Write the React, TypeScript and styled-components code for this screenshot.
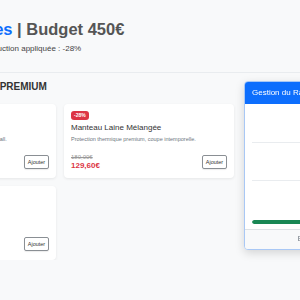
import styled, { createGlobalStyle } from "styled-components";

const GlobalStyle = createGlobalStyle`
  body {
    margin: 0;
    overflow: hidden;
    background-color: #f8f9fa;
    font-family: "Liberation Sans", Arial, sans-serif;
    color: #333333;
  }
`;

const Header = styled.header`
  border-bottom: 1px solid #e9ecef;
  padding: 20px 0 19px;
`;

const HeaderInner = styled.div`
  margin-left: -104px;
  white-space: nowrap;
`;

const Title = styled.h1`
  margin: 0;
  font-size: 16.5px;
  line-height: 1.2;
  font-weight: 700;
  color: #555555;
`;

const Accent = styled.span`
  color: #0d6efd;
`;

const Subtitle = styled.p`
  margin: 4px 0 0 -2px;
  font-size: 8px;
  line-height: 1.2;
  color: #444444;
`;

const Main = styled.main`
  margin-left: -114px;
  padding-top: 8px;
`;

const SectionTitle = styled.h2`
  margin: 0 0 11px;
  padding-left: 2px;
  font-size: 10px;
  line-height: 1.2;
  font-weight: 700;
  color: #333333;
  white-space: nowrap;
`;

const Grid = styled.div`
  display: grid;
  grid-template-columns: 170px 170px;
  gap: 8px;
`;

const Card = styled.article`
  display: flex;
  flex-direction: column;
  background-color: #ffffff;
  border-radius: 4px;
  box-shadow: 0 1px 3px rgba(0, 0, 0, 0.08);
  padding: 7px 7px 8px;
  min-height: 59px;
`;

const Badge = styled.span`
  align-self: flex-start;
  background-color: #dc3545;
  color: #ffffff;
  font-size: 5px;
  font-weight: 700;
  line-height: 1;
  padding: 1.6px 3px;
  border-radius: 3px;
  margin-bottom: 3.4px;
`;

const CardTitle = styled.h3`
  margin: 0;
  font-size: 8px;
  line-height: 1.2;
  font-weight: 400;
  color: #333333;
`;

const Description = styled.p`
  margin: 3px 0 0;
  font-size: 5.5px;
  line-height: 1.2;
  color: #6c757d;
  white-space: nowrap;
`;

const CardFooter = styled.div`
  margin-top: auto;
  display: flex;
  align-items: center;
  justify-content: space-between;
`;

const Prices = styled.div`
  display: flex;
  flex-direction: column;
`;

const OldPrice = styled.span`
  font-size: 6px;
  line-height: 1.2;
  color: #999999;
  text-decoration: line-through;
`;

const Price = styled.span`
  font-size: 8px;
  line-height: 1.2;
  font-weight: 700;
  color: #dc3545;
`;

const AddButton = styled.button`
  font-family: inherit;
  font-size: 5.5px;
  line-height: 1.2;
  color: #333333;
  background-color: #ffffff;
  border: 1px solid #8a8f94;
  border-radius: 2px;
  padding: 2.4px 2.8px;
  box-shadow: 0 1px 1px rgba(0, 0, 0, 0.08);
`;

const Panel = styled.aside`
  position: fixed;
  top: 81px;
  left: 244px;
  width: 184px;
  background-color: #ffffff;
  border: 1px solid #a9c8f5;
  border-radius: 4px;
  box-shadow: 0 3px 10px rgba(0, 0, 0, 0.15);
  overflow: hidden;
`;

const PanelHeader = styled.div`
  background-color: #0d6efd;
  color: #ffffff;
  font-size: 8px;
  line-height: 1.2;
  padding: 6px 7px;
  white-space: nowrap;
`;

const PanelBody = styled.div`
  padding: 0 6.5px;
`;

const PanelSection = styled.div`
  padding: 14.5px 0;
  text-align: center;
  font-size: 8px;
  line-height: 1.2;
  color: #555555;

  & + & {
    border-top: 1px solid #e9ecef;
    padding: 13.5px 0;
  }
`;

const BudgetSection = styled.div`
  border-top: 1px solid #e9ecef;
  padding: 9px 0 5.5px;
  text-align: center;
`;

const BudgetLabel = styled.div`
  font-size: 7px;
  line-height: 1.2;
  color: #6c757d;
`;

const BudgetValue = styled.div`
  margin-top: 2px;
  font-size: 8px;
  line-height: 1.2;
  font-weight: 700;
  color: #198754;
`;

const Track = styled.div`
  margin-top: 10px;
  height: 4px;
  border-radius: 2px;
  background-color: #e9ecef;
  overflow: hidden;
`;

const Fill = styled.div`
  height: 100%;
  border-radius: 2px;
  background-color: #198754;
`;

const PanelFooter = styled.div`
  border-top: 1px solid #dee2e6;
  background-color: #f8f9fa;
  padding: 5px;
  text-align: center;
  font-size: 7px;
  line-height: 1.2;
  color: #6c757d;
  white-space: nowrap;
`;

const products = [
  {
    name: "Blouson Varsity",
    description: "Inspiration universitaire vintage, style baseball.",
    price: 150,
  },
  {
    name: "Manteau Laine Mélangée",
    description: "Protection thermique premium, coupe intemporelle.",
    price: 180,
  },
  {
    name: "Gilet Matelassé",
    description: "Léger et chaud.",
    price: 90,
  },
];

const DISCOUNT = 0.28;
const BUDGET = 450;
const spent = 0;

const euro = (v: number) => v.toFixed(2).replace(".", ",") + "€";

export default function App() {
  const remaining = ((BUDGET - spent) / BUDGET) * 100;

  return (
    <>
      <GlobalStyle />
      <Header>
        <HeaderInner>
          <Title>
            <Accent>Ventes Privées</Accent> | Budget 450€
          </Title>
          <Subtitle>Catégorie : Manteaux — Réduction appliquée : -28%</Subtitle>
        </HeaderInner>
      </Header>
      <Main>
        <SectionTitle>MANTEAUX &amp; VESTES PREMIUM</SectionTitle>
        <Grid>
          {products.map((p) => (
            <Card key={p.name}>
              <Badge>-28%</Badge>
              <CardTitle>{p.name}</CardTitle>
              <Description>{p.description}</Description>
              <CardFooter>
                <Prices>
                  <OldPrice>{euro(p.price)}</OldPrice>
                  <Price>{euro(p.price * (1 - DISCOUNT))}</Price>
                </Prices>
                <AddButton>Ajouter</AddButton>
              </CardFooter>
            </Card>
          ))}
        </Grid>
      </Main>
      <Panel>
        <PanelHeader>Gestion du Rayon</PanelHeader>
        <PanelBody>
          <PanelSection>Panier vide</PanelSection>
          <PanelSection>Total : {euro(spent)}</PanelSection>
          <BudgetSection>
            <BudgetLabel>Budget restant</BudgetLabel>
            <BudgetValue>{euro(BUDGET - spent)}</BudgetValue>
            <Track>
              <Fill style={{ width: `${remaining}%` }} />
            </Track>
          </BudgetSection>
        </PanelBody>
        <PanelFooter>Budget restant : 450,00 €</PanelFooter>
      </Panel>
    </>
  );
}
